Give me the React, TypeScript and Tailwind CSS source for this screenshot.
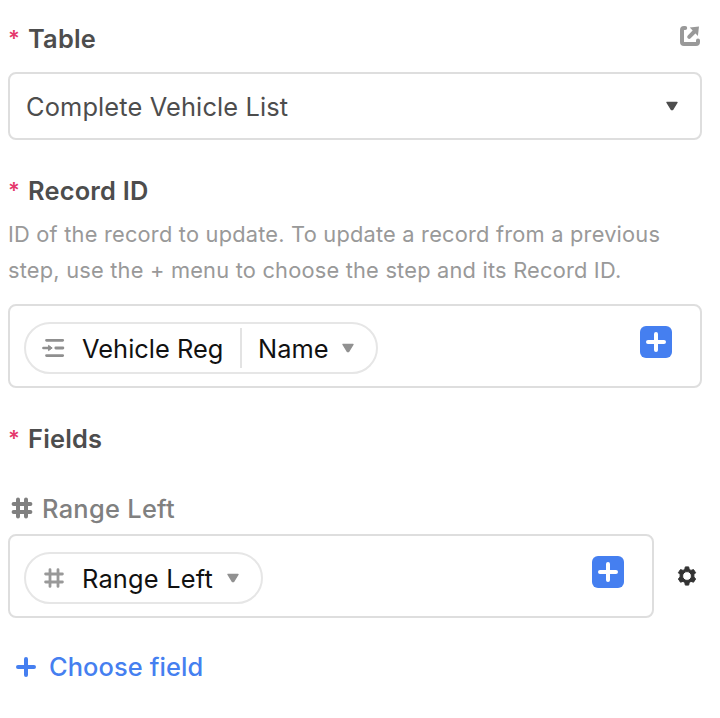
import type { ReactNode } from "react";

const ExternalIcon = () => (
  <svg width="22" height="22" viewBox="0 0 22 22" fill="none" className="mr-px mb-1.5">
    <path
      d="M6.2 2.9H5Q3 2.9 3 4.9V17Q3 19 5 19H17Q19 19 19 17V15.4"
      stroke="#999999"
      strokeWidth="4"
      strokeLinecap="round"
    />
    <path d="M10.2 11.8L15.5 6.5" stroke="#999999" strokeWidth="4" strokeLinecap="round" />
    <path d="M10.8 2.6L20 1.6L18.9 11Z" fill="#999999" />
  </svg>
);

const Caret = ({ className }: { className: string }) => (
  <svg width="12" height="10" viewBox="0 0 12 10" className={className}>
    <path
      d="M1 1.4H11L7 8Q6 9.3 5 8Z"
      fill="currentColor"
      stroke="currentColor"
      strokeWidth="1.4"
      strokeLinejoin="round"
    />
  </svg>
);

const HashIcon = ({ weight, className }: { weight: number; className: string }) => (
  <svg
    width="22"
    height="22"
    viewBox="0 0 22 22"
    fill="none"
    stroke="currentColor"
    strokeWidth={weight}
    strokeLinecap="round"
    className={className}
  >
    <path d="M7 2.6V19.4M15 2.6V19.4M2.6 7H19.4M2.6 15H19.4" />
  </svg>
);

const StepIcon = () => (
  <svg
    width="24"
    height="22"
    viewBox="0 0 24 22"
    fill="none"
    stroke="#8f8f8f"
    strokeWidth="2.8"
    strokeLinecap="round"
    className="-ml-px shrink-0"
  >
    <path d="M5.5 3.3H21.7M14.8 11H21.9M5.5 18.6H21.7" />
    <path d="M2.4 11H9" strokeWidth="2.6" />
    <path d="M7.8 8.6L11.2 11L7.8 13.4Z" fill="#8f8f8f" strokeWidth="1" strokeLinejoin="round" />
  </svg>
);

const GearIcon = () => (
  <svg width="20" height="20" viewBox="0 0 20 20">
    <path
      fillRule="evenodd"
      fill="#333333"
      stroke="#333333"
      strokeWidth="1"
      strokeLinejoin="round"
      d="M8.3 0.9H11.7L12.2 3.4L14 4.4L16.5 3.6L18.6 6.7L16.9 8.6V11L18.6 13L16.5 16.2L14 15.4L12.2 16.5L11.7 19.1H8.3L7.8 16.5L6 15.4L3.5 16.2L1.4 13L3.1 11V8.6L1.4 6.7L3.5 3.6L6 4.4L7.8 3.4ZM10 5.6A4.4 4.4 0 1 0 10 14.4A4.4 4.4 0 1 0 10 5.6Z"
    />
  </svg>
);

const PlusIcon = ({ weight, className }: { weight: number; className?: string }) => (
  <svg
    width="20"
    height="20"
    viewBox="0 0 20 20"
    stroke="currentColor"
    strokeWidth={weight}
    strokeLinecap="round"
    className={className}
  >
    <path d="M10 2V18M2 10H18" />
  </svg>
);

const RequiredLabel = ({ children }: { children: ReactNode }) => (
  <div className="flex h-[34px] items-center text-[25.4px] font-[570] text-[#4d4d4d]">
    <span className="w-5 pb-0.5 text-[22px] font-semibold text-[#e5386d]">*</span>
    <span className="tracking-[0.2px] whitespace-nowrap">{children}</span>
  </div>
);

const AddButton = () => (
  <button type="button" className="mt-1 flex size-8 items-center justify-center rounded-[6px] bg-[#457ff0] text-white">
    <PlusIcon weight={4} />
  </button>
);

const TokenField = ({ children, className }: { children: ReactNode; className: string }) => (
  <div
    className={`flex h-[84px] items-start justify-between rounded-lg border-2 border-[#dedede] pt-4 pr-7 pl-3.5 ${className}`}
  >
    <div className="flex h-[52px] items-center rounded-full border-2 border-[#e6e6e6] pl-4 text-[25.4px] tracking-[0.1px] text-[#111111]">
      {children}
    </div>
    <AddButton />
  </div>
);

const App = () => {
  return (
    <main className="h-[718px] w-[720px] bg-white pr-[18px] pl-2 font-['Inter','Liberation_Sans',sans-serif]">
      <div className="flex h-[72px] items-center justify-between pt-1.5">
        <RequiredLabel>Table</RequiredLabel>
        <ExternalIcon />
      </div>
      <div className="flex h-[68px] items-center justify-between rounded-lg border-2 border-[#dedede] pr-[22px] pl-4 text-[25.4px] tracking-[0.13px] text-[#4d4d4d]">
        <span className="pt-0.5">Complete Vehicle List</span>
        <Caret className="text-[#4d4d4d]" />
      </div>

      <div className="mt-[34px]">
        <RequiredLabel>Record ID</RequiredLabel>
      </div>
      <p className="mt-2 text-[21.8px] leading-9 tracking-[0.21px] whitespace-nowrap text-[#999999]">
        <span className="block">ID of the record to update. To update a record from a previous</span>
        <span className="block">step, use the + menu to choose the step and its Record ID.</span>
      </p>
      <TokenField className="mt-4">
        <StepIcon />
        <span className="ml-[17px] w-[158px] pt-0.5 tracking-[0.03px] whitespace-nowrap">Vehicle Reg</span>
        <span className="h-10 w-0.5 bg-[#e3e3e3]" />
        <span className="ml-4 w-[84px] pt-0.5 tracking-normal">Name</span>
        <Caret className="mr-[22px] text-[#919191]" />
      </TokenField>

      <div className="mt-[34px]">
        <RequiredLabel>Fields</RequiredLabel>
      </div>
      <div className="mt-9 flex h-[34px] items-center text-[25.4px] font-medium tracking-[0.3px] text-[#808080]">
        <HashIcon weight={4} className="mr-[9px] mb-0.5 ml-[3px]" />
        <span>Range Left</span>
      </div>
      <div className="mt-2 flex items-center">
        <TokenField className="w-[646px]">
          <HashIcon weight={2.8} className="ml-px text-[#999999]" />
          <span className="ml-[17px] w-[145px] pt-0.5 tracking-[0.2px] whitespace-nowrap">Range Left</span>
          <Caret className="mr-[22px] text-[#919191]" />
        </TokenField>
        <button type="button" className="ml-[23px]">
          <GearIcon />
        </button>
      </div>
      <button
        type="button"
        className="mt-8 flex h-[34px] items-center text-[25.4px] font-[550] tracking-[0.1px] text-[#457ff0]"
      >
        <PlusIcon weight={4} className="mr-[13px] mb-px ml-2" />
        <span>Choose field</span>
      </button>
    </main>
  );
};

export default App;
